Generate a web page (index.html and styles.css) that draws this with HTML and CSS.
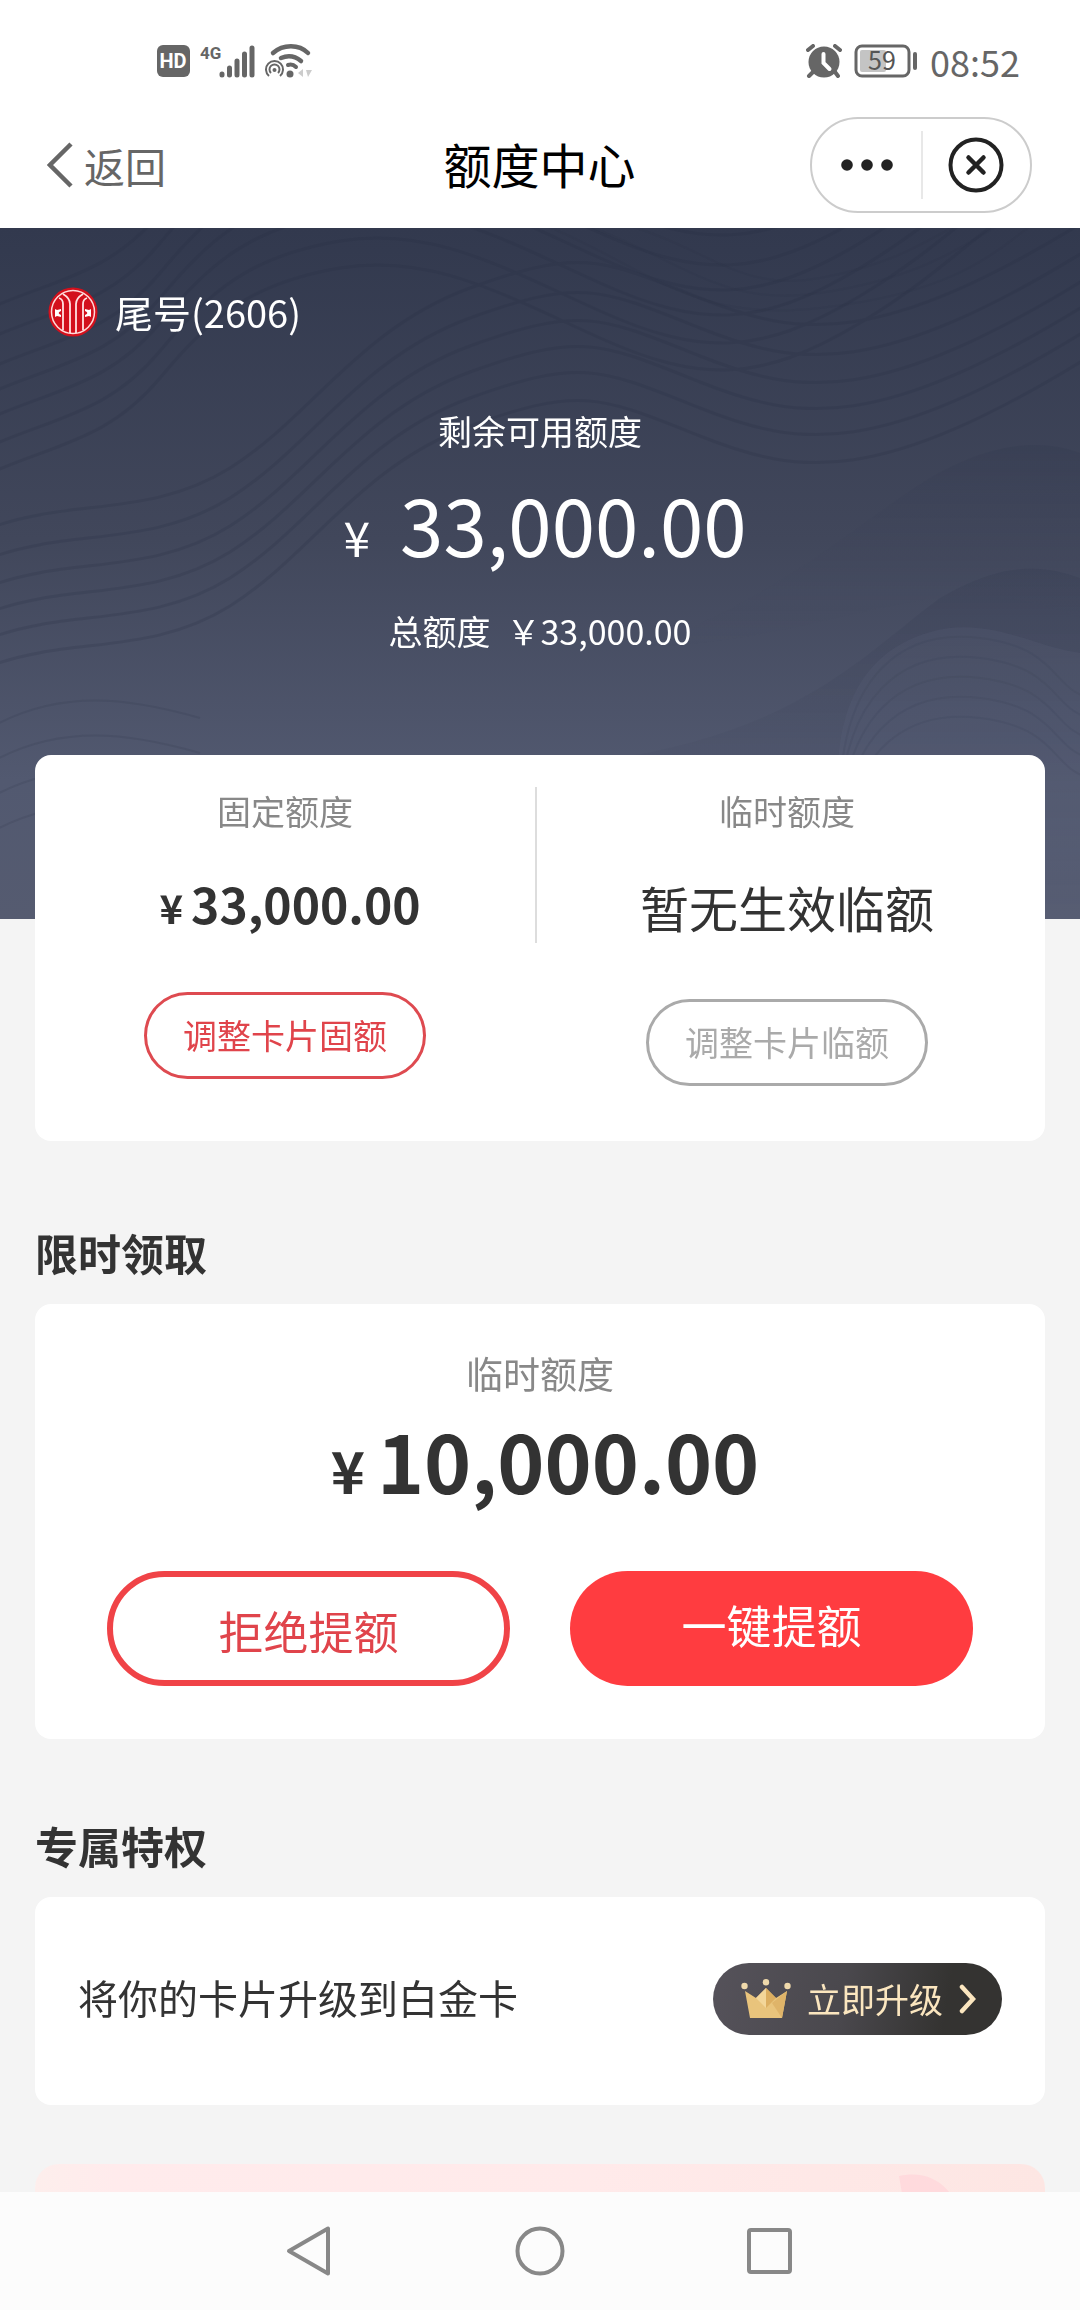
FILE: index.html
```html
<!DOCTYPE html>
<html lang="zh-CN">
<head>
<meta charset="utf-8">
<meta name="viewport" content="width=device-width, initial-scale=1">
<title>额度中心</title>
<link rel="stylesheet" href="styles.css">
</head>
<body>
<div class="app">
  <div class="status">
    <div class="status-group status-left">
      <svg width="34" height="34" viewBox="0 0 34 34" aria-label="HD"><rect x="0" y="1" width="33" height="32" rx="6" fill="#666"/><text x="16" y="24" class="hd-text" text-anchor="middle">HD</text></svg>
      <svg class="signal" width="56" height="34" viewBox="0 0 56 34" aria-label="4G"><text x="0" y="15" class="net-text">4G</text><g stroke="#666" stroke-width="5" stroke-linecap="round"><path d="M22 30v1M29.500 24v7M37 17v14M44.500 10v21M52 4v27"/></g></svg>
      <svg width="50" height="34" viewBox="0 0 50 34" fill="none" stroke="#666" aria-hidden="true"><path d="M8 9C18 0 34 0 43 9" stroke-width="4.500" stroke-linecap="round"/><path d="M16 14c7-3 14-2 20 3" stroke-width="4.500" stroke-linecap="round"/><path d="M23 21c3-1 5-1 8 2" stroke-width="4" stroke-linecap="round"/><circle cx="25" cy="30" r="3.500" fill="#666" stroke="none"/><path d="M4 32a8.500 8.500 0 1 1 11 0" stroke-width="2"/><path d="M6 29a5 5 0 1 1 7 0" stroke-width="2"/><circle cx="9.500" cy="26" r="2" fill="#666" stroke="none"/><path d="M38 25v8l-5-4zM41 26h6l-4 7z" fill="#ccc" stroke="none"/></svg>
    </div>
    <div class="status-group">
      <svg width="36" height="34" viewBox="0 0 36 34" aria-hidden="true"><circle cx="18" cy="18" r="15.500" fill="#666"/><path d="M2 6l5-4M29 2l5 4M7 28l-4 4M29 28l3 4" stroke="#666" stroke-width="4" stroke-linecap="round"/><path d="M17.500 10v9l6 6" fill="none" stroke="#fff" stroke-width="4" stroke-linecap="round"/></svg>
      <svg class="battery" width="64" height="34" viewBox="0 0 64 34" aria-label="59%"><rect x="2" y="2" width="53" height="30" rx="6" fill="none" stroke="#666" stroke-width="3"/><rect x="6" y="6" width="26" height="22" rx="2" fill="#c4c4c4"/><rect x="59" y="8" width="4" height="18" rx="2" fill="#666"/><text x="28" y="26" text-anchor="middle" class="battery-text">59</text></svg>
      <span class="clock">08:52</span>
    </div>
  </div>

  <header class="header">
    <button class="back" type="button">
      <svg width="27" height="46" viewBox="0 0 27 46" fill="none" stroke="#666" stroke-width="4.500" aria-hidden="true"><path d="M24 2L3 23l21 21"/></svg>
      <span>返回</span>
    </button>
    <h1 class="title">额度中心</h1>
    <div class="capsule">
      <button class="capsule-btn capsule-more" type="button" aria-label="更多"><svg width="52" height="12" viewBox="0 0 52 12" fill="#222"><circle cx="6" cy="6" r="5.800"/><circle cx="26" cy="6" r="5.800"/><circle cx="46" cy="6" r="5.800"/></svg></button>
      <button class="capsule-btn capsule-close" type="button" aria-label="关闭"><svg width="56" height="56" viewBox="0 0 56 56" fill="none" stroke="#222"><circle cx="28" cy="28" r="25.500" stroke-width="4"/><path d="M20.500 20.500l15 15M35.500 20.500l-15 15" stroke-width="4.500" stroke-linecap="round"/></svg></button>
    </div>
  </header>

  <main class="content">
    <section class="hero">
      <svg class="hero-waves" viewBox="0 0 1080 691" preserveAspectRatio="none" fill="none" aria-hidden="true">
        <defs>
          <linearGradient id="hill" x1="0" y1="0" x2="0" y2="1"><stop offset="0" stop-color="#30374d" stop-opacity=".32"/><stop offset="1" stop-color="#4c5269" stop-opacity="0"/></linearGradient>
          <path id="wave" d="M-10 310C60 280 110 275 160 215S250 120 340 105S500 130 600 175S760 220 860 160S990 50 1090 0"/>
          <path id="swell" d="M-10 330C70 300 150 320 230 270S360 130 470 90S600 60 700 100S880 150 1090 20"/>
          <path id="ripple" d="M840 560C845 450 900 400 980 410S1050 460 1090 470"/>
          <path id="fold" d="M-10 480C60 440 130 450 200 470"/>
        </defs>
        <g stroke="#242b40" stroke-width="3" opacity=".18">
          <use href="#wave" y="-230"/><use href="#wave" y="-200"/><use href="#wave" y="-170"/><use href="#wave" y="-145"/><use href="#wave" y="-120"/><use href="#wave" y="-92"/><use href="#wave" y="-65"/>
          <use href="#swell" y="-30"/><use href="#swell"/><use href="#swell" y="28"/><use href="#swell" y="54"/><use href="#swell" y="80"/><use href="#swell" y="108"/>
        </g>
        <g stroke="#2c3349" stroke-width="2" opacity=".16">
          <path d="M540-5C650 40 690 95 820 80S990 30 1040-10M580-5C680 30 720 80 820 65S960 20 1010-10M620-5C710 20 740 65 820 50S930 10 970-10"/>
          <use href="#ripple"/><use href="#ripple" y="20"/><use href="#ripple" y="40"/><use href="#ripple" y="60"/><use href="#ripple" y="80"/>
          <use href="#fold" y="20"/><use href="#fold" y="55"/><use href="#fold" y="90"/><use href="#fold" y="125"/>
        </g>
        <path d="M640 420C780 370 850 300 930 250C990 215 1040 210 1080 225V390C940 330 850 410 640 420z" fill="url(#hill)" opacity=".7"/>
        <path d="M620 530C800 500 860 430 940 370C1000 335 1040 335 1080 350V691H620z" fill="url(#hill)" opacity=".7"/>
        <path d="M838 560C835 460 880 410 950 400C1000 395 1040 420 1080 425V691H838z" fill="#626882" opacity=".16"/>
      </svg>
      <div class="account">
        <svg width="50" height="50" viewBox="0 0 50 50" aria-hidden="true"><circle cx="25" cy="25" r="24.500" fill="#d3101c"/><circle cx="25" cy="25" r="21.500" fill="none" stroke="#ffd9d9" stroke-width="1.500"/><g fill="none" stroke="#ffe2e2" stroke-width="1.800"><path d="M11 11c3 1 4 3 4 6v26M39 11c-3 1-4 3-4 6v26M15 7c5 3 7 6 7 10v29M35 7c-5 3-7 6-7 10v29"/></g><path d="M7 22l2 1 4-1v2c-3 1-3 3 0 4v2l-4-1-2 1zM43 22l-2 1-4-1v2c3 1 3 3 0 4v2l4-1 2 1z" fill="#fff"/></svg>
        <span>尾号(2606)</span>
      </div>
      <p class="hero-label">剩余可用额度</p>
      <p class="hero-amount"><span class="yen hero-yen">¥</span><span>33,000.00</span></p>
      <p class="hero-total"><span>总额度</span><span>￥33,000.00</span></p>
    </section>

    <div class="page">
      <section class="card limits">
        <div class="limit">
          <p class="limit-label">固定额度</p>
          <p class="limit-amount"><span class="yen limit-yen">¥</span><span>33,000.00</span></p>
          <button class="pill" type="button">调整卡片固额</button>
        </div>
        <div class="limit-divider"></div>
        <div class="limit">
          <p class="limit-label">临时额度</p>
          <p class="limit-none">暂无生效临额</p>
          <button class="pill pill-muted" type="button">调整卡片临额</button>
        </div>
      </section>

      <h2 class="section-title">限时领取</h2>
      <section class="card offer">
        <p class="offer-label">临时额度</p>
        <p class="offer-amount"><span class="yen offer-yen">¥</span><span>10,000.00</span></p>
        <div class="offer-actions">
          <button class="action action-outline" type="button">拒绝提额</button>
          <button class="action action-solid" type="button">一键提额</button>
        </div>
      </section>

      <h2 class="section-title">专属特权</h2>
      <section class="card perk">
        <p class="perk-text">将你的卡片升级到白金卡</p>
        <button class="upgrade" type="button">
          <svg width="50" height="40" viewBox="0 0 50 40" aria-hidden="true"><path d="M4 12l11 7 10-10 10 10 11-7-5 27H9z" fill="#e9c47c"/><path d="M25 9l10 10-10 10z" fill="#dcae60"/><path d="M25 9L15 19l10 10z" fill="#f3d699"/><path d="M46 12L31 24l10 15z" fill="#dfb469"/><circle cx="3.500" cy="7" r="3.200" fill="#efd9ab"/><circle cx="25" cy="3.200" r="3.200" fill="#efd9ab"/><circle cx="46.500" cy="7" r="3.200" fill="#efd9ab"/></svg>
          <span>立即升级</span>
          <svg width="17" height="30" viewBox="0 0 17 30" fill="none" stroke="#fbe6bf" stroke-width="4.500" stroke-linecap="round" aria-hidden="true"><path d="M3 3l11 12L3 27"/></svg>
        </button>
      </section>

      <div class="banner">
        <svg class="banner-art" width="100" height="60" viewBox="0 0 100 60" aria-hidden="true"><path d="M4 2C40-6 66 18 68 60H14z" fill="#ffdadd"/><path d="M80 20q8 8 10 40H80z" fill="#e6cfd2"/></svg>
      </div>
    </div>
  </main>

  <nav class="navbar">
    <button class="nav-btn" type="button" aria-label="返回"><svg width="52" height="52" viewBox="0 0 52 52"><path d="M43 3.500v45L4 26z"/></svg></button>
    <button class="nav-btn" type="button" aria-label="主页"><svg width="52" height="52" viewBox="0 0 52 52"><circle cx="26" cy="26" r="22.500"/></svg></button>
    <button class="nav-btn" type="button" aria-label="最近任务"><svg width="52" height="52" viewBox="0 0 52 52"><rect x="6" y="5" width="41" height="42" rx="2"/></svg></button>
  </nav>
</div>
</body>
</html>
```
FILE: styles.css
```css
* {
  box-sizing: border-box;
}

body {
  margin: 0;
  background: #f4f4f4;
  color: #333;
  font-family: "Noto Sans CJK SC", "Noto Sans", sans-serif;
}

p,
h1,
h2 {
  margin: 0;
}

button {
  margin: 0;
  padding: 0;
  border: 0;
  background: none;
  color: inherit;
  font: inherit;
}

svg {
  display: block;
  flex: none;
}

.app {
  display: flex;
  flex-direction: column;
  height: 100vh;
}

/* System status bar */
.status {
  display: flex;
  flex: none;
  justify-content: space-between;
  padding: 37px 60px 15px 157px;
  background: #fff;
}

.status-group {
  display: flex;
  align-items: center;
  gap: 12px;
}

.status-left {
  gap: 9px;
}

.battery {
  overflow: visible;
}

.clock {
  color: #666;
  font-size: 36px;
  line-height: 48px;
}

.hd-text {
  fill: #fff;
  font: bold 20px Roboto, sans-serif;
}

.net-text {
  fill: #666;
  font: bold 17px Roboto, sans-serif;
}

.battery-text {
  fill: #555;
  font: 25px "Noto Sans CJK SC", sans-serif;
}

/* Title bar */
.header {
  display: grid;
  grid-template-columns: 1fr auto 1fr;
  flex: none;
  align-items: center;
  padding: 17px 48px 15px 47px;
  background: #fff;
}

.back {
  display: flex;
  align-items: center;
  gap: 10px;
  color: #666;
  font-size: 41px;
  line-height: 48px;
}

.title {
  padding-bottom: 4px;
  color: #000;
  font-size: 48px;
  font-weight: 400;
  line-height: 64px;
}

.capsule {
  display: flex;
  align-items: center;
  justify-self: end;
  border: 2px solid #ccc;
  border-radius: 48px;
}

.capsule-btn {
  display: flex;
  align-items: center;
  justify-content: center;
  width: 109px;
  height: 92px;
}

.capsule-close {
  background: linear-gradient(#e8e8e8, #e8e8e8) left center / 2px 68px no-repeat;
}

/* Scrolling content */
.content {
  flex: 1;
  min-height: 0;
  overflow: hidden;
}

.hero {
  position: relative;
  padding: 59px 48px 264px;
  background: linear-gradient(#32394e, #41475b 45%, #525970 80%, #555b70);
  color: #fff;
  text-align: center;
}

.hero-waves {
  position: absolute;
  inset: 0;
  width: 100%;
  height: 100%;
}

.account,
.hero-label,
.hero-amount,
.hero-total {
  position: relative;
}

.account {
  display: flex;
  align-items: center;
  gap: 17px;
  font-size: 38px;
  line-height: 50px;
}

.hero-label {
  margin-top: 70px;
  font-size: 34px;
  line-height: 48px;
}

.yen {
  line-height: 1;
}

.hero-amount {
  display: flex;
  align-items: baseline;
  justify-content: center;
  gap: 30px;
  margin-top: 20px;
  padding-left: 10px;
  font-size: 78px;
  line-height: 96px;
}

.hero-yen {
  font-size: 48px;
}

.hero-total {
  display: flex;
  justify-content: center;
  gap: 16px;
  margin-top: 36px;
  font-size: 34px;
  line-height: 48px;
}

.page {
  position: relative;
  margin-top: -164px;
  padding: 0 35px;
}

.card {
  border-radius: 16px;
  background: #fff;
}

/* Fixed and temporary limits */
.limits {
  display: grid;
  grid-template-columns: 1fr 2px 1fr;
  margin-bottom: 81px;
  padding: 32px 8px 55px 0;
}

.limit {
  display: flex;
  flex-direction: column;
  align-items: center;
}

.limit-label {
  margin-bottom: 32px;
  color: #888;
  font-size: 34px;
  line-height: 48px;
}

.limit-divider {
  height: 156px;
  background: #ddd;
}

.limit-amount {
  display: flex;
  align-items: baseline;
  gap: 8px;
  margin-bottom: 53px;
  padding-left: 10px;
  font-size: 48px;
  font-weight: 700;
  line-height: 72px;
}

.limit-yen {
  font-size: 40px;
}

.limit-none {
  margin-bottom: 52px;
  font-size: 49px;
  line-height: 80px;
}

.pill {
  padding: 0 36px 2px;
  border: 3px solid #de4a50;
  border-radius: 44px;
  color: #e0444b;
  font-size: 34px;
  line-height: 79px;
}

.pill-muted {
  border-color: #aaa;
  color: #aaa;
}

.section-title {
  margin-bottom: 22px;
  font-size: 43px;
  font-weight: 700;
  line-height: 60px;
}

/* Limited-time offer */
.offer {
  margin-bottom: 76px;
  padding: 45px 72px 53px;
  text-align: center;
}

.offer-label {
  color: #888;
  font-size: 37px;
  line-height: 48px;
}

.offer-amount {
  display: flex;
  align-items: baseline;
  justify-content: center;
  gap: 12px;
  margin: 14px 0 64px;
  padding-left: 10px;
  font-size: 80px;
  font-weight: 700;
  line-height: 96px;
}

.offer-yen {
  font-size: 58px;
}

.offer-actions {
  display: grid;
  grid-template-columns: 1fr 1fr;
  gap: 60px;
}

.action {
  height: 115px;
  border-radius: 58px;
  font-size: 45px;
  line-height: 64px;
}

.action-outline {
  padding-top: 4px;
  border: 6px solid #f04347;
  color: #e0444b;
}

.action-solid {
  padding-bottom: 8px;
  background: #ff3c40;
  color: #fff;
}

/* Card upgrade */
.perk {
  display: flex;
  align-items: center;
  justify-content: space-between;
  padding: 66px 43px 70px;
}

.perk-text {
  padding-bottom: 4px;
  font-size: 40px;
  line-height: 64px;
}

.upgrade {
  display: flex;
  align-items: center;
  gap: 16px;
  padding: 0 26px 0 28px;
  border-radius: 36px;
  background: linear-gradient(100deg, #55525a, #4a484d 45%, #343331 80%);
  color: #fbe6bf;
  font-size: 34px;
  line-height: 72px;
}

.banner {
  position: relative;
  height: 240px;
  margin-top: 59px;
  border-radius: 24px;
  background: linear-gradient(90deg, #fdeeec, #ffebec 8%, #ffeaea 55%, #fde6e3);
}

.banner-art {
  position: absolute;
  top: 10px;
  right: 50px;
}

/* System navigation */
.navbar {
  display: flex;
  flex: none;
  align-items: center;
  justify-content: center;
  gap: 177px;
  padding: 33px 0;
  background: #fcfcfc;
}

.nav-btn svg {
  fill: none;
  stroke: #888;
  stroke-width: 4;
  stroke-linejoin: round;
}
```
